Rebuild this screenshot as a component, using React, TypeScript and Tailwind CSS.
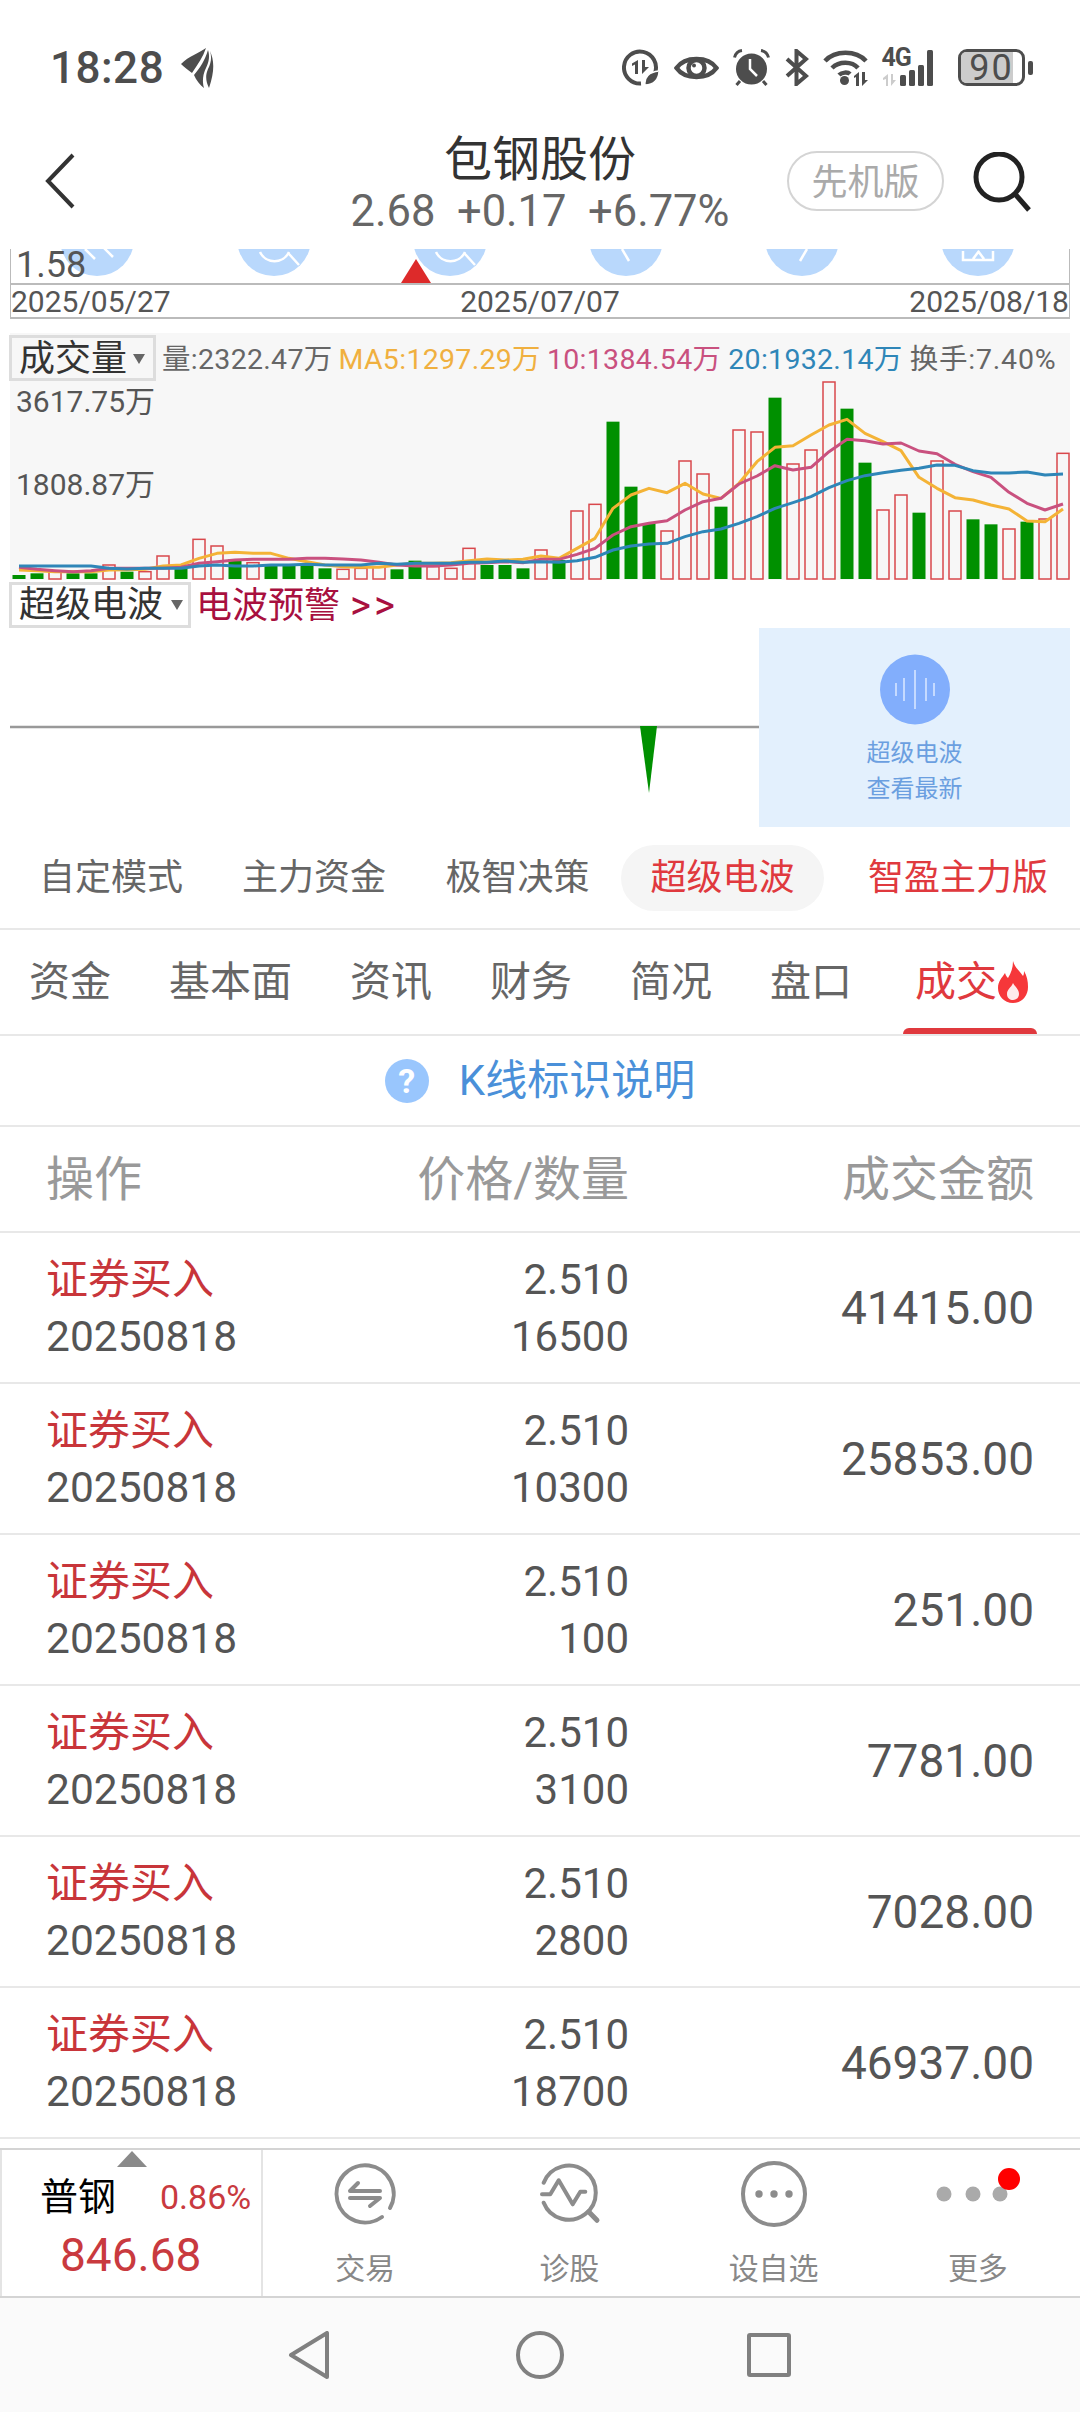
import { ReactNode } from 'react'

// bar tops and MA values are read off the reference, in zoom units: panel y = top / 3 - 13
const BARS: [string, number][] = [
  ['g', 765], ['g', 760], ['r', 755], ['g', 760], ['g', 760], ['r', 735], ['g', 755], ['r', 755], ['r', 708], ['g', 745],
  ['r', 658], ['r', 678], ['g', 717], ['r', 728], ['g', 738], ['g', 738], ['g', 735], ['g', 745], ['r', 748], ['r', 745],
  ['r', 740], ['g', 748], ['g', 722], ['r', 740], ['r', 745], ['r', 685], ['g', 735], ['g', 735], ['g', 745], ['r', 690],
  ['g', 720], ['r', 573], ['r', 553], ['g', 305], ['g', 500], ['g', 610], ['r', 633], ['r', 423], ['r', 462], ['g', 560],
  ['r', 330], ['r', 336], ['g', 233], ['r', 432], ['r', 390], ['r', 186], ['g', 266], ['g', 428], ['r', 570], ['r', 525],
  ['g', 578], ['r', 423], ['r', 573], ['g', 598], ['g', 613], ['r', 627], ['g', 605], ['r', 597], ['r', 400],
]

const MA5 = [
  750, 752, 755, 755, 755, 750, 749, 748, 738, 735, 715, 700, 697, 700, 700, 715, 725, 735, 740, 742, 742, 735, 730, 730, 728, 722, 717, 720, 718, 708,
  715, 685, 655, 565, 525, 505, 518, 490, 522, 535, 490, 425, 382, 377, 345, 315, 298, 340, 365, 392, 472, 505, 533, 540, 555, 567, 603, 605, 567,
]
const MA10 = [
  742, 748, 752, 755, 752, 745, 745, 745, 745, 742, 730, 725, 720, 718, 718, 718, 715, 715, 717, 720, 727, 735, 738, 738, 735, 730, 728, 725, 728, 718,
  718, 703, 685, 645, 620, 610, 602, 570, 545, 535, 492, 468, 437, 450, 442, 395, 358, 362, 372, 369, 393, 401, 433, 455, 472, 517, 550, 570, 552,
]
const MA20 = [
  738, 738, 738, 738, 738, 745, 747, 745, 745, 745, 738, 735, 738, 738, 735, 735, 733, 735, 735, 735, 730, 733, 730, 730, 730, 727, 727, 723, 727, 725,
  727, 722, 712, 690, 678, 672, 670, 650, 635, 627, 610, 590, 565, 548, 530, 503, 482, 467, 458, 451, 445, 435, 436, 452, 459, 459, 456, 465, 462,
]

const ROWS = [
  ['16500', '41415.00'],
  ['10300', '25853.00'],
  ['100', '251.00'],
  ['3100', '7781.00'],
  ['2800', '7028.00'],
  ['18700', '46937.00'],
]

const barX = (i: number) => 9 + 18 * i
const barY = (top: number) => top / 3 - 13
const linePoints = (values: number[]) => values.map((v, i) => `${barX(i)},${barY(v)}`).join(' ')

function Caret() {
  return (
    <svg width="12" height="10" viewBox="0 0 12 10" className="shrink-0">
      <path d="M0 0H12L6 10Z" fill="#666" />
    </svg>
  )
}

function StatusIcons() {
  return (
    <div className="flex items-center gap-[14.5px] text-[#4d4d4d]">
      <svg width="37" height="37" viewBox="0 0 37 37">
        <path d="M33 24A16 16 0 1 0 19 34.500" fill="none" stroke="#4d4d4d" strokeWidth="4" />
        <path d="M15 10V24H12V14.500L9 16V13.500ZM19 10V24L26 17H22V10Z" fill="#4d4d4d" transform="translate(1 1)" />
        <path d="M23 36C22 28 27 23 37 22C37 30 32 36 23 36Z" fill="#4d4d4d" stroke="#fff" strokeWidth="1.500" />
      </svg>
      <svg width="45" height="28" viewBox="0 0 45 28">
        <path d="M2.500 14C11 2 34 2 42.500 14C34 26 11 26 2.500 14Z" fill="none" stroke="#4d4d4d" strokeWidth="4.500" />
        <circle cx="22.500" cy="14" r="8" fill="none" stroke="#4d4d4d" strokeWidth="4.500" />
        <circle cx="20" cy="11.500" r="2" fill="#4d4d4d" />
      </svg>
      <svg width="37" height="37" viewBox="0 0 37 37">
        <circle cx="18.500" cy="20" r="15.500" fill="#4d4d4d" />
        <path d="M1.500 8.500C2.500 4.500 5 2 9 1.500M35.500 8.500C34.500 4.500 32 2 28 1.500M7 32L3.500 36M30 32L33.500 36" fill="none" stroke="#4d4d4d" strokeWidth="3" />
        <path d="M17 10V20L24 27" fill="none" stroke="#fff" strokeWidth="2.500" />
      </svg>
      <svg width="24" height="37" viewBox="0 0 24 37">
        <path d="M2 10L21 27L11.500 35V2L21 10L2 27" fill="none" stroke="#4d4d4d" strokeWidth="4" />
      </svg>
      <svg width="45" height="39" viewBox="0 0 45 39">
        <path d="M2 13C12 2 33 2 43 13M9 20C16 13 29 13 35 20M16 27C19 24 25 24 27 26" fill="none" stroke="#4d4d4d" strokeWidth="4.500" />
        <circle cx="21.500" cy="32.500" r="4.500" fill="#4d4d4d" />
        <path d="M36 24V38H33V29L31 30V28ZM39 24V38L45 32H42V24Z" fill="#4d4d4d" />
      </svg>
      <div className="relative h-[38px] w-[61px]">
        <span className="absolute -top-[2px] -left-[1px] text-[25px] leading-[22px] font-bold tracking-[-1px]">4G</span>
        <svg width="61" height="38" viewBox="0 0 61 38" className="absolute top-0 left-0">
          <path d="M5 25V37H3V30L0 31V29ZM8 25V37L13 31H10V25Z" fill="#ccc" />
          <rect x="17" y="26" width="6" height="11" rx="1.500" fill="#4d4d4d" />
          <rect x="26" y="21" width="6" height="16" rx="1.500" fill="#4d4d4d" />
          <rect x="35" y="16" width="6" height="21" rx="1.500" fill="#4d4d4d" />
          <rect x="44" y="1" width="6" height="36" rx="1.500" fill="#4d4d4d" />
        </svg>
      </div>
      <div className="flex items-center gap-[3px]">
        <div className="relative flex h-[37px] w-[67px] items-center justify-center rounded-[9px] border-[3.500px] border-[#4d4d4d]">
          <div className="absolute inset-y-0 left-0 w-[52px] rounded-l-[5px] bg-[#cccccc]" />
          <span className="relative text-[36px] leading-[30px] tracking-[2px]">90</span>
        </div>
        <div className="h-[14px] w-[5px] rounded-[2px] bg-[#4d4d4d]" />
      </div>
    </div>
  )
}

function StripIcons() {
  return (
    <svg width="1060" height="36" viewBox="0 0 1060 36" className="absolute top-0 left-0">
      {[86, 263, 439, 615, 791, 967].map((cx) => (
        <circle key={cx} cx={cx} cy="-10" r="37" fill="#b9d8fc" />
      ))}
      <g fill="none" stroke="#fff" strokeWidth="2.500">
        <path d="M74 0L84 10M92 -2L102 8" />
        <path d="M249 3A16 16 0 0 0 278 3M278 5L288 16" />
        <path d="M425 3A16 16 0 0 0 454 3M454 5L464 16" />
        <path d="M611 0L618 12" />
        <path d="M796 0L789 12" />
        <path d="M952 2V11H982V2M962 10L968 2M973 10L967 2" />
      </g>
    </svg>
  )
}

function VolumeChart() {
  return (
    <svg width="1060" height="249" viewBox="0 0 1060 249" className="absolute top-0 left-0">
      {BARS.map(([kind, top], i) =>
        kind === 'g' ? (
          <rect key={i} x={barX(i) - 6.5} y={barY(top)} width="13" height={246 - barY(top)} fill="#009000" />
        ) : (
          <rect key={i} x={barX(i) - 6} y={barY(top)} width="12" height={246 - barY(top)} fill="none" stroke="#d9484c" strokeWidth="1.500" />
        ),
      )}
      <polyline points={linePoints(MA5)} fill="none" stroke="#f4b336" strokeWidth="3" strokeLinejoin="round" />
      <polyline points={linePoints(MA10)} fill="none" stroke="#c9517f" strokeWidth="3" strokeLinejoin="round" />
      <polyline points={linePoints(MA20)} fill="none" stroke="#2f86b8" strokeWidth="3" strokeLinejoin="round" />
    </svg>
  )
}

function Flame() {
  return (
    <svg width="30" height="42" viewBox="0 0 30 42" className="shrink-0">
      <path d="M15 0C17 7 21 9 25 15C26 13 26 12 26 10C29 15 30 20 30 26C30 35 24 42 15 42C6 42 0 35 0 27C0 20 4 17 7 12C8 15 9 16 10 17C13 12 15 7 15 0Z" fill="#f6373a" />
      <path d="M15 22C17 26 21 28 21 33C21 37 18 39 15 39C12 39 9 37 9 33C9 28 13 27 15 22Z" fill="#fff" opacity="0.900" />
    </svg>
  )
}

function NavItem({ label, children }: { label: string; children: ReactNode }) {
  return (
    <div className="flex flex-1 flex-col items-center pt-[12px]">
      <div className="h-[64px] w-[64px]">{children}</div>
      <span className="mt-[25px] text-[30px] leading-[36px] text-[#888]">{label}</span>
    </div>
  )
}

export default function App() {
  return (
    <div className="flex h-[2412px] w-[1080px] flex-col overflow-hidden bg-white [font-family:Roboto,'Noto_Sans_CJK_SC',sans-serif]">
      {/* Status bar */}
      <div className="flex h-[120px] shrink-0 items-start justify-between pt-[48px] pr-[47px] pl-[50px]">
        <div className="flex items-center gap-[17px] text-[#4d4d4d]">
          <span className="text-[44px] leading-[40px] font-medium tracking-[0.5px]">18:28</span>
          <svg width="33" height="40" viewBox="0 0 33 40">
            <path d="M0 16C8 8 18 5 25 0C22 9 17 16 11 25C7 22 3 19 0 16Z" fill="#4d4d4d" />
            <path d="M13 27C19 20 24 12 27 2C29 8 28 14 25 20C22 26 21 33 23 40C19 37 15 32 13 27Z" fill="#4d4d4d" />
            <path d="M29 3C33 12 34 22 28 40C25 34 24 28 27 21C30 15 31 9 29 3Z" fill="#4d4d4d" />
          </svg>
        </div>
        <StatusIcons />
      </div>

      {/* Header */}
      <div className="grid h-[129px] shrink-0 grid-cols-[1fr_auto_1fr]">
        <div className="pt-[33px] pl-[45px]">
          <svg width="30" height="56" viewBox="0 0 30 56">
            <path d="M28 2L3 28L28 54" fill="none" stroke="#333" strokeWidth="4" />
          </svg>
        </div>
        <div className="flex flex-col items-center pt-[15px]">
          <span className="text-[48px] leading-[50px] text-[#333]">包钢股份</span>
          <span className="mt-[5px] text-[43.500px] leading-[44px] whitespace-pre text-[#666]">2.68  +0.17  +6.77%</span>
        </div>
        <div className="flex items-start justify-end pt-[31px] pr-[49px]">
          <div className="flex h-[60px] w-[157px] items-center justify-center rounded-[30px] border-2 border-[#d4d4d4] pt-[3px] text-[36px] text-[#aaa]">
            先机版
          </div>
          <svg width="58" height="60" viewBox="0 0 58 60" className="mt-[1px] ml-[29px]">
            <circle cx="26" cy="25" r="23" fill="none" stroke="#222" strokeWidth="5" />
            <path d="M42 42L56 58" fill="none" stroke="#222" strokeWidth="5" />
          </svg>
        </div>
      </div>

      {/* Date strip */}
      <div className="mx-[10px] h-[70px] shrink-0 border-x border-[#bbb]">
        <div className="relative h-[36px] border-b-2 border-[#bbb]">
          <StripIcons />
          <span className="absolute top-[-2px] left-[5px] text-[36px] leading-[36px] text-[#555]">1.58</span>
          <svg width="30" height="24" viewBox="0 0 30 24" className="absolute bottom-0 left-[390px]">
            <path d="M15 0L30 24H0Z" fill="#dd2a2a" />
          </svg>
        </div>
        <div className="flex h-[34px] items-center justify-between border-b-2 border-[#bbb] pt-[2px] text-[30px] leading-[32px] text-[#555]">
          <span>2025/05/27</span>
          <span>2025/07/07</span>
          <span>2025/08/18</span>
        </div>
      </div>

      {/* Volume panel */}
      <div className="relative mx-[10px] mt-[14px] h-[247px] shrink-0 bg-[#f7f7f7]">
        <VolumeChart />
        <div className="relative flex items-center text-[28.500px] leading-[46px] tracking-[0.3px] whitespace-nowrap">
          <div className="-ml-[1px] flex h-[46px] w-[147px] items-center gap-[6px] border-[3px] border-[#dddddd] pt-[2px] pl-[7px] text-[36px] tracking-normal text-[#333]">
            <span className="leading-none">成交量</span>
            <Caret />
          </div>
          <span className="mt-[4px] ml-[6px] text-[#666]">量:2322.47万</span>
          <span className="mt-[4px] ml-[6px] text-[#f0b03f]">MA5:1297.29万</span>
          <span className="mt-[4px] ml-[6px] text-[#c9517f]">10:1384.54万</span>
          <span className="mt-[4px] ml-[7px] text-[#2f86b8]">20:1932.14万</span>
          <span className="mt-[4px] ml-[7px] tracking-[0.8px] text-[#666]">换手:7.40%</span>
        </div>
        <span className="absolute top-[50px] left-[6px] text-[30px] leading-[38px] text-[#555]">3617.75万</span>
        <span className="absolute top-[133px] left-[6px] text-[30px] leading-[38px] text-[#555]">1808.87万</span>
      </div>

      {/* Wave panel header */}
      <div className="mx-[10px] mt-[2px] flex h-[46px] shrink-0 items-center">
        <div className="-ml-[1px] flex h-[46px] w-[182px] items-center gap-[8px] border-[3px] border-[#dddddd] pl-[7px] text-[36px] text-[#333]">
          <span className="leading-none">超级电波</span>
          <Caret />
        </div>
        <span className="ml-[5px] pt-[2px] text-[36px] text-[#a8103f]">电波预警</span>
        <span className="ml-[10px] pt-[2px] text-[40px] tracking-[3px] text-[#a8103f]">&gt;&gt;</span>
      </div>

      {/* Wave panel */}
      <div className="mx-[10px] flex h-[199px] shrink-0">
        <svg width="749" height="199" viewBox="0 0 749 199" className="shrink-0">
          <path d="M0 99H749" stroke="#999" strokeWidth="2.500" />
          <path d="M630 98H647L639 165Z" fill="#009000" />
        </svg>
        <div className="flex flex-1 flex-col items-center bg-[#e3f0fd] pt-[26px]">
          <svg width="70" height="71" viewBox="0 0 70 71">
            <circle cx="35" cy="35.500" r="35" fill="#82aefc" />
            <path d="M16 29V42M24 24V47M35 16V55M46 24V47M54 29V42" stroke="#dce9ff" strokeWidth="1.500" />
          </svg>
          <span className="mt-[10px] text-[24px] leading-[36px] text-[#6b9fe0]">超级电波</span>
          <span className="text-[24px] leading-[36px] text-[#6b9fe0]">查看最新</span>
        </div>
      </div>

      {/* Mode tabs */}
      <div className="flex h-[103px] shrink-0 items-center gap-[3px] border-b-2 border-[#e8e8e8] pl-[11px] text-[36px] text-[#666]">
        <span className="flex h-[66px] w-[200px] items-center justify-center">自定模式</span>
        <span className="flex h-[66px] w-[200px] items-center justify-center">主力资金</span>
        <span className="flex h-[66px] w-[201px] items-center justify-center">极智决策</span>
        <span className="flex h-[66px] w-[203px] items-center justify-center rounded-[33px] bg-[#f5f5f5] text-[#e0393e]">超级电波</span>
        <span className="ml-[41px] text-[#e0393e]">智盈主力版</span>
      </div>

      {/* Detail tabs */}
      <div className="flex h-[106px] shrink-0 gap-[58px] border-b-2 border-[#e8e8e8] pl-[29px] text-[41px] text-[#666]">
        <span className="self-center pt-[2px]">资金</span>
        <span className="self-center pt-[2px]">基本面</span>
        <span className="self-center pt-[2px]">资讯</span>
        <span className="self-center pt-[2px]">财务</span>
        <span className="self-center pt-[2px]">简况</span>
        <span className="self-center pt-[2px]">盘口</span>
        <div className="relative ml-[5px] flex items-center gap-[1px] text-[#e0393e]">
          <span className="pt-[2px]">成交</span>
          <Flame />
          <div className="absolute right-[-9px] bottom-0 left-[-12px] h-[6px] rounded-t-[6px] bg-[#e0393e]" />
        </div>
      </div>

      {/* K-line legend link */}
      <div className="flex h-[91px] shrink-0 items-center justify-center gap-[30px] border-b-2 border-[#e8e8e8]">
        <div className="flex h-[44px] w-[44px] items-center justify-center rounded-full bg-[#99c6fd] text-[34px] leading-none font-bold text-white">?</div>
        <span className="text-[42px] leading-none text-[#4a90d9]">K线标识说明</span>
      </div>

      {/* Trade table */}
      <div className="flex h-[106px] shrink-0 items-center border-b-2 border-[#e8e8e8] pt-[2px] text-[48px] text-[#999]">
        <span className="w-[379px] pl-[46px]">操作</span>
        <span className="w-[250px] text-right whitespace-nowrap">价格/数量</span>
        <span className="flex-1 pr-[46px] text-right">成交金额</span>
      </div>
      {ROWS.map(([qty, amount], i) => (
        <div key={i} className="flex h-[151px] shrink-0 items-center border-b-2 border-[#e8e8e8] pt-[1px]">
          <div className="w-[420px] pl-[46px]">
            <div className="text-[42px] leading-[57px] text-[#c8353a]">证券买入</div>
            <div className="text-[42.500px] leading-[57px] text-[#555]">20250818</div>
          </div>
          <div className="w-[209px] text-right text-[42px] leading-[57px] text-[#555]">
            <div>2.510</div>
            <div>{qty}</div>
          </div>
          <div className="flex-1 pr-[46px] text-right text-[46px] leading-[57px] text-[#555]">{amount}</div>
        </div>
      ))}
      <div className="h-[9px] shrink-0" />

      {/* Bottom toolbar */}
      <div className="flex h-[150px] shrink-0 border-y-2 border-[#d4d4d4]">
        <div className="flex w-[263px] shrink-0 flex-col border-x-2 border-[#e4e4e4]">
          <svg width="30" height="16" viewBox="0 0 30 16" className="mt-[1px] ml-[115px]">
            <path d="M15 0L30 16H0Z" fill="#8a8a8a" />
          </svg>
          <div className="mt-[9px] flex h-[42px] items-center pl-[38px]">
            <span className="text-[38px] leading-[42px] text-black">普钢</span>
            <span className="ml-[44px] text-[34px] leading-[42px] text-[#c93a3f]">0.86%</span>
          </div>
          <div className="mt-[12px] pl-[58px] text-[46px] leading-[50px] text-[#c93a3f]">846.68</div>
        </div>
        <div className="flex flex-1">
          <NavItem label="交易">
            <svg width="64" height="64" viewBox="0 0 64 64">
              <g fill="none" stroke="#8c8c8c" strokeWidth="4" strokeLinecap="round" strokeLinejoin="round">
                <path d="M49 55A28.600 28.600 0 1 1 57 46" />
                <path d="M47 29H17L25 21M17 36H47L37 44" />
              </g>
            </svg>
          </NavItem>
          <NavItem label="诊股">
            <svg width="64" height="64" viewBox="0 0 64 64">
              <g fill="none" stroke="#8c8c8c" strokeWidth="4" strokeLinecap="round" strokeLinejoin="round">
                <path d="M6.700 20.700A27 27 0 1 1 6.700 40.700" />
                <path d="M5 32.300H13.300L21.700 18.300L35.700 42.300L43.300 29.700H48.300" />
                <path d="M51.700 49.700L60 58.300" strokeWidth="5" />
              </g>
            </svg>
          </NavItem>
          <NavItem label="设自选">
            <svg width="64" height="64" viewBox="0 0 64 64" className="overflow-visible">
              <circle cx="32" cy="32" r="31" fill="none" stroke="#8c8c8c" strokeWidth="4" />
              <circle cx="17" cy="32" r="3.700" fill="#8c8c8c" />
              <circle cx="32" cy="32" r="3.700" fill="#8c8c8c" />
              <circle cx="47" cy="32" r="3.700" fill="#8c8c8c" />
            </svg>
          </NavItem>
          <NavItem label="更多">
            <svg width="64" height="64" viewBox="0 0 64 64" className="overflow-visible">
              <circle cx="-2" cy="32" r="7.500" fill="#aaa" />
              <circle cx="27" cy="32" r="7.500" fill="#aaa" />
              <circle cx="54" cy="32" r="7.500" fill="#aaa" />
              <circle cx="63" cy="17" r="11" fill="#ff0000" />
            </svg>
          </NavItem>
        </div>
      </div>

      {/* System navigation */}
      <div className="flex flex-1 items-center bg-[#fafafa] pl-[288px]">
        <svg width="41" height="48" viewBox="0 0 41 48">
          <path d="M39 2V46L3 24Z" fill="none" stroke="#808080" strokeWidth="4" strokeLinejoin="round" />
        </svg>
        <svg width="48" height="48" viewBox="0 0 48 48" className="ml-[187px]">
          <circle cx="24" cy="24" r="22" fill="none" stroke="#808080" strokeWidth="4" />
        </svg>
        <div className="ml-[183px] h-[44px] w-[44px] rounded-[3px] border-[4px] border-[#808080]" />
      </div>
    </div>
  )
}
